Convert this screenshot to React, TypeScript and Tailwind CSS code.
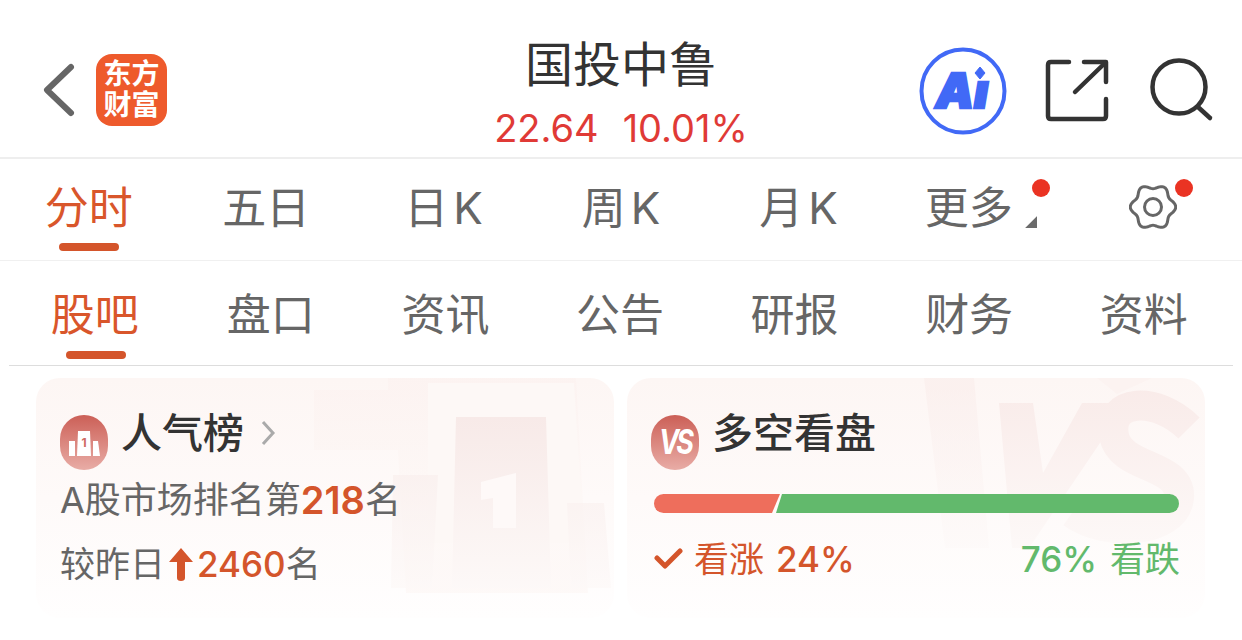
import React from 'react';

const FONT = 'font-["Inter","Noto_Sans_CJK_SC",sans-serif]';

const topTabs = ['分时', '五日', '日', '周', '月', '更多'];
const subTabs = ['股吧', '盘口', '资讯', '公告', '研报', '财务', '资料'];

// wavy six lobed outline of the settings gear
const gearPath = (() => {
  const pts: string[] = [];
  for (let i = 0; i < 120; i++) {
    const t = (i / 120) * Math.PI * 2;
    const r = 20.5 + 2.2 * Math.cos(6 * t);
    pts.push(`${(24 + r * Math.cos(t)).toFixed(2)} ${(24 + r * Math.sin(t)).toFixed(2)}`);
  }
  return `M${pts.join('L')}Z`;
})();

const Header = () => (
  <header className="flex h-[159px] items-center border-b-2 border-[#eeeeee] pt-[23px]">
    <div className="flex flex-1 items-center">
      <svg className="ml-[40px]" width="38" height="56" viewBox="0 0 38 56" fill="none" stroke="#666666" strokeWidth="6" strokeLinecap="round" strokeLinejoin="round">
        <path d="M31 5 L7 28 L31 51" />
      </svg>
      <div className="ml-[18px] flex h-[72px] w-[71px] flex-col items-center justify-center rounded-[16px] bg-[#ee5a2c] text-[28px] font-bold leading-[31px] text-white">
        <span>东方</span>
        <span>财富</span>
      </div>
    </div>
    <div className="mt-[12px] flex flex-col items-center self-start">
      <div className="text-[48px] leading-[60px] text-[#333333]">国投中鲁</div>
      <div className="mt-[13px] flex gap-[24px] text-[38px] leading-[40px] text-[#e03a36]">
        <span>22.64</span>
        <span>10.01%</span>
      </div>
    </div>
    <div className="flex flex-1 items-center justify-end">
      <svg className="mt-[2px]" width="88" height="88" viewBox="0 0 88 88" fill="none">
        <circle cx="44" cy="44" r="41.5" stroke="#4169f6" strokeWidth="4" />
        <text x="43" y="61" textAnchor="middle" fill="#4169f6" stroke="#4169f6" strokeWidth="2.5" fontFamily="Inter, sans-serif" fontSize="48" fontWeight="900" fontStyle="italic">Aı</text>
        <path d="M61 20 L66 26 L61 32 L56 26 Z" fill="#4169f6" stroke="#4169f6" strokeLinejoin="round" />
      </svg>
      <svg className="ml-[38px]" width="64" height="64" viewBox="0 0 64 64" fill="none" stroke="#333333" strokeWidth="4.5" strokeLinecap="round" strokeLinejoin="round">
        <path d="M24 4 H6 Q3 4 3 7 V58 Q3 61 6 61 H58 Q61 61 61 58 V41" />
        <path d="M39 4 H61 V24" />
        <path d="M60 5 L30 34" />
      </svg>
      <svg className="ml-[41px] mr-[28px]" width="64" height="64" viewBox="0 0 64 64" fill="none" stroke="#333333" strokeWidth="4.5" strokeLinecap="round">
        <circle cx="29" cy="29" r="26.5" />
        <path d="M48 49 L60 60" />
      </svg>
    </div>
  </header>
);

const TopTabs = () => (
  <nav className="grid h-[102px] grid-cols-7 border-b border-[#f0f0f0]">
    {topTabs.map((t, i) => (
      <div key={t} className={`relative flex items-center justify-center ${i === 5 ? 'pb-[4px] pr-[14px]' : 'pb-[4px]'}`}>
        <span className={`text-[44px] leading-[56px] ${i === 0 ? 'text-[#d9562b]' : 'text-[#666666]'}`}>{t}</span>
        {i >= 2 && i <= 4 && <span className="ml-[5px] text-[44px] leading-[56px] text-[#666666]">K</span>}
        {i === 0 && <span className="absolute bottom-[9px] h-[8px] w-[60px] rounded-full bg-[#d4552b]" />}
        {i === 5 && (
          <>
            <span className="absolute left-[145px] top-[20px] h-[18px] w-[18px] rounded-full bg-[#ea3323]" />
            <span className="absolute left-[138px] top-[57px] h-[12px] w-[12px] bg-[#6b6b6b] [clip-path:polygon(100%_0,100%_100%,0_100%)]" />
          </>
        )}
      </div>
    ))}
    <div className="relative flex items-center justify-center pb-[6px]">
      <svg width="48" height="48" viewBox="0 0 48 48" fill="none" stroke="#666666" strokeWidth="3">
        <path d={gearPath} strokeLinejoin="round" />
        <circle cx="24" cy="24" r="8.5" />
      </svg>
      <span className="absolute left-[110px] top-[20px] h-[18px] w-[18px] rounded-full bg-[#ea3323]" />
    </div>
  </nav>
);

const SubTabs = () => (
  <nav className="mx-[9px] grid h-[105px] grid-cols-7 border-b border-[#dddddd] pr-[2px]">
    {subTabs.map((t, i) => (
      <div key={t} className="relative flex items-center justify-center pt-[4px]">
        <span className={`text-[44px] leading-[56px] ${i === 0 ? 'pr-[3px] text-[#d9562b]' : 'text-[#666666]'}`}>{t}</span>
        {i === 0 && <span className="absolute bottom-[6px] h-[8px] w-[60px] rounded-full bg-[#d4552b]" />}
      </div>
    ))}
  </nav>
);

const RoundIcon = ({ children }: { children: React.ReactNode }) => (
  <div className="flex h-[55px] w-[48px] shrink-0 items-center justify-center rounded-full bg-gradient-to-b from-[#cb5f57] to-[#e8aca6]">
    {children}
  </div>
);

const RankCard = () => (
  <section className="relative h-[240px] flex-1 overflow-hidden rounded-[24px] bg-gradient-to-b from-[#fdf6f4] to-[#fffefe] pl-[24px] pt-[37px]">
    <svg className="absolute inset-0" width="578" height="240" viewBox="0 0 578 240">
      <defs>
        <linearGradient id="rankFade" gradientUnits="userSpaceOnUse" x1="0" y1="30" x2="0" y2="215">
          <stop offset="0" stopColor="#f7e9e7" />
          <stop offset="1" stopColor="#fdf9f8" />
        </linearGradient>
        <linearGradient id="rankGhost" gradientUnits="userSpaceOnUse" x1="0" y1="0" x2="0" y2="120">
          <stop offset="0" stopColor="#fcf2f0" />
          <stop offset="1" stopColor="#fdf7f5" />
        </linearGradient>
      </defs>
      <path d="M278 12 H352 V0 H540 L552 215 H370 L362 72 H278 Z" fill="url(#rankGhost)" opacity="0.7" />
      <path d="M392 5 H538 L548 165 H392 Z" fill="#fdf8f6" />
      <path d="M420 39 H510 L515 210 H416 Z" fill="url(#rankFade)" />
      <path d="M445 104 L480 95 V150 H457 V120 L445 122 Z" fill="#fef9f8" />
      <path d="M357 97 H402 L396 210 H355 Z" fill="url(#rankFade)" opacity="0.7" />
      <path d="M531 125 H568 L575 210 H535 Z" fill="url(#rankFade)" opacity="0.7" />
    </svg>
    <div className="relative">
      <div className="flex h-[55px] items-center">
        <RoundIcon>
          <svg width="32" height="28" viewBox="0 0 32 28" fill="#ffffff">
            <path d="M1 12 H7 V27 H1 Z" />
            <path d="M10 2 H22 L23 27 H9 Z" />
            <path d="M25 12 H30 L32 27 H25 Z" />
            <text x="16" y="18" textAnchor="middle" fill="#cf6a62" fontSize="12" fontWeight="700">1</text>
          </svg>
        </RoundIcon>
        <span className="ml-[13px] -translate-y-[10px] text-[41px] font-medium leading-[50px] text-[#333333]">人气榜</span>
        <svg className="ml-[17px] -translate-y-[10px]" width="15" height="26" viewBox="0 0 15 26" fill="none" stroke="#aaaaaa" strokeWidth="3">
          <path d="M2 2 L12 13 L2 24" />
        </svg>
      </div>
      <div className="mt-[6px] flex items-center text-[36px] leading-[48px] text-[#666666]">
        A股市场排名第<span className="text-[38px] font-semibold text-[#d4552b]">218</span>名
      </div>
      <div className="mt-[16px] flex items-center text-[35px] leading-[48px] text-[#666666]">
        较昨日
        <svg className="mx-[4px]" width="24" height="33" viewBox="0 0 24 33" fill="#d4552b">
          <path d="M12 0 L24 14 H16 V30 Q16 33 12 33 Q8 33 8 30 V14 H0 Z" />
        </svg>
        <span className="font-medium text-[#d4552b]">2460</span>名
      </div>
    </div>
  </section>
);

const VsCard = () => (
  <section className="relative h-[240px] flex-1 overflow-hidden rounded-[24px] bg-gradient-to-b from-[#fdf6f4] to-[#fffefe] pl-[24px] pt-[37px]">
    <svg className="absolute inset-0" width="578" height="240" viewBox="0 0 578 240" fill="none">
      <defs>
        <linearGradient id="vsFade" gradientUnits="userSpaceOnUse" x1="0" y1="10" x2="0" y2="175">
          <stop offset="0" stopColor="#f9ebe9" />
          <stop offset="1" stopColor="#fdf9f8" />
        </linearGradient>
      </defs>
      <path d="M297 0 H347 L362 170 H318 Z" fill="url(#vsFade)" opacity="0.5" />
      <path d="M372 25 H406 L416 95 L455 25 H500 L402 170 H385 Z" fill="url(#vsFade)" />
      <path d="M562 50 C530 18 480 20 487 58 C494 92 555 85 552 120 C548 155 480 160 445 135" stroke="url(#vsFade)" strokeWidth="30" />
      <path d="M470 0 L490 16 L525 0 Z" fill="#fcf3f1" />
    </svg>
    <div className="relative">
      <div className="flex h-[55px] items-center">
        <RoundIcon>
          <span className="scale-y-125 text-[27px] font-bold italic leading-none tracking-[-3px] text-white">VS</span>
        </RoundIcon>
        <span className="ml-[13px] -translate-y-[10px] text-[41px] font-medium leading-[50px] text-[#333333]">多空看盘</span>
      </div>
      <div className="ml-[3px] mt-[24px] flex h-[19px] w-[525px]">
        <div className="h-full w-[126px] rounded-l-full bg-[#ee6e5c] [clip-path:polygon(0_0,100%_0,calc(100%-8px)_100%,0_100%)]" />
        <div className="-ml-[4px] h-full flex-1 rounded-r-full bg-[#62b96c] [clip-path:polygon(6px_0,100%_0,100%_100%,0_100%)]" />
      </div>
      <div className="ml-[3px] mt-[22px] flex w-[526px] items-center justify-between text-[35px] leading-[48px]">
        <div className="flex items-center text-[#d4552b]">
          <svg className="mr-[11px]" width="29" height="22" viewBox="0 0 29 22" fill="none" stroke="#d4552b" strokeWidth="5" strokeLinecap="round" strokeLinejoin="round">
            <path d="M3 10 L11 18 L26 3" />
          </svg>
          <span>看涨</span>
          <span className="ml-[12px] font-medium">24%</span>
        </div>
        <div className="flex items-center text-[#62b96c]">
          <span className="font-medium">76%</span>
          <span className="ml-[13px]">看跌</span>
        </div>
      </div>
    </div>
  </section>
);

export default function App() {
  return (
    <div className={`h-[640px] w-[1242px] overflow-hidden bg-white ${FONT}`}>
      <Header />
      <TopTabs />
      <SubTabs />
      <div className="flex gap-[13px] pl-[36px] pr-[37px] pt-[12px]">
        <RankCard />
        <VsCard />
      </div>
    </div>
  );
}
